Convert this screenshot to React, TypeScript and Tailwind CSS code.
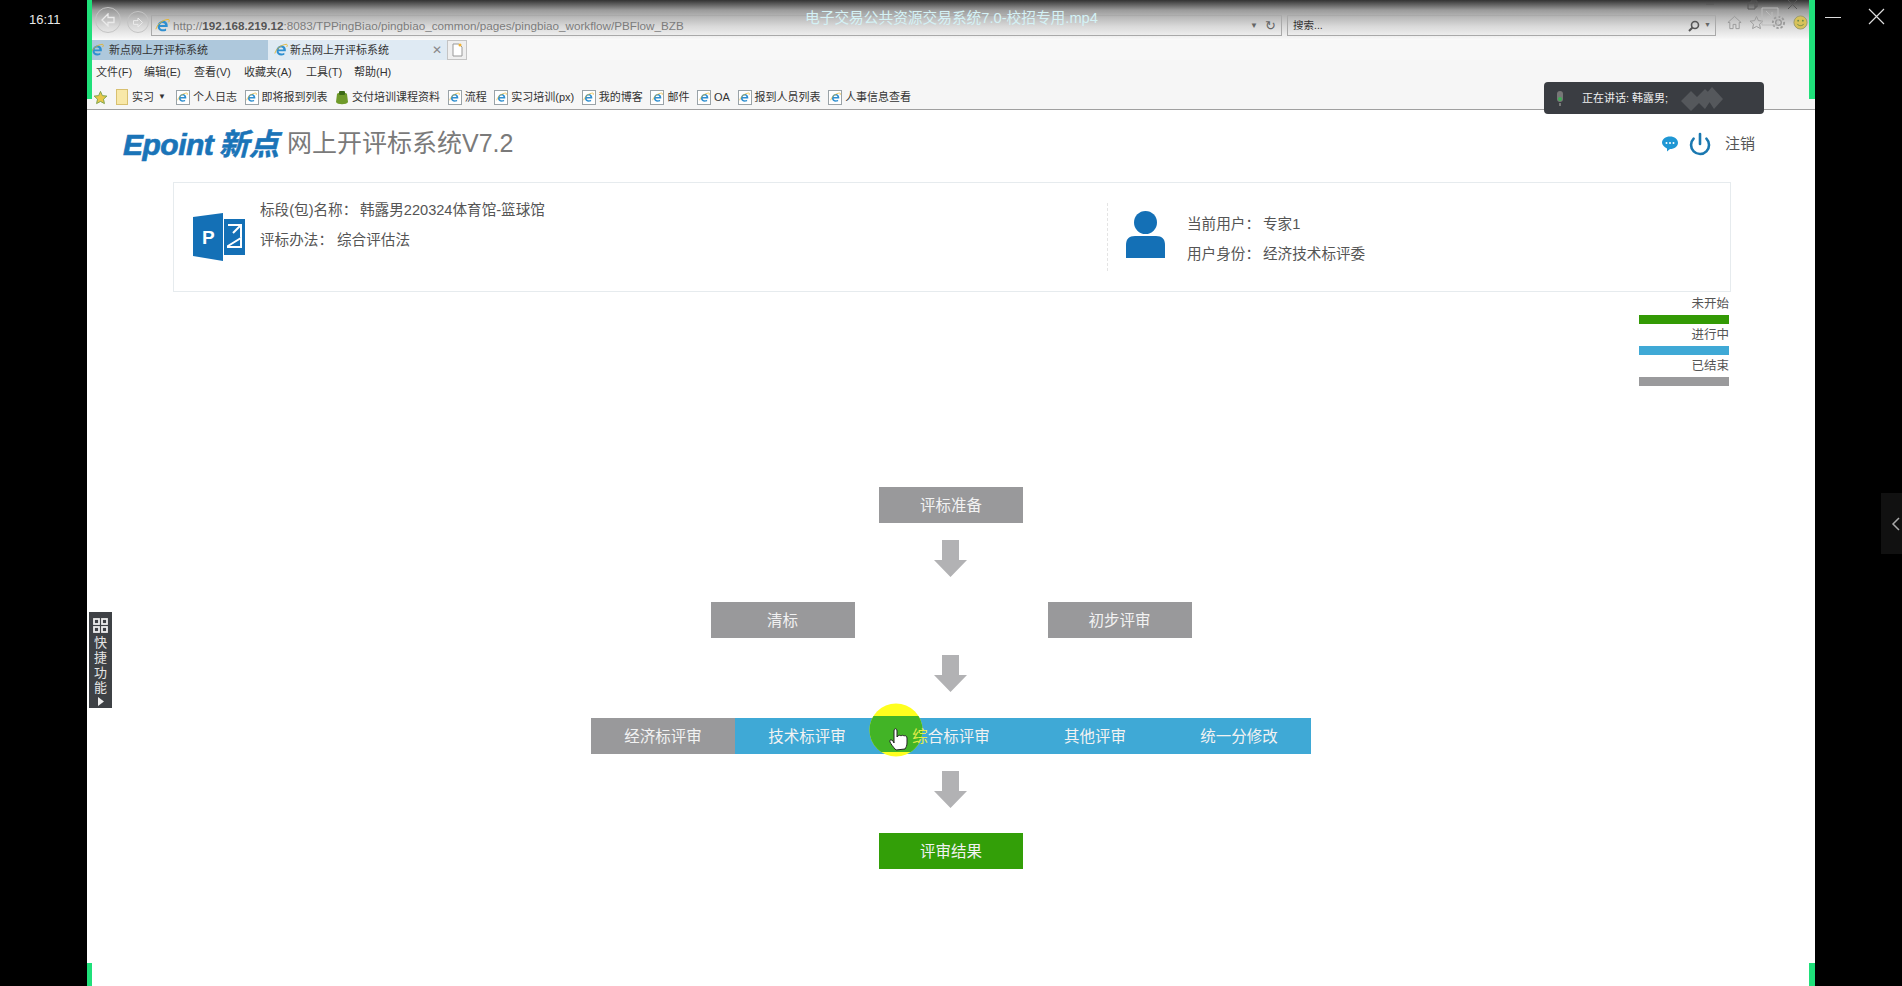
import { Power } from 'lucide-react'

const menus = [
  { label: '文件(F)', w: 'w-[48px]' },
  { label: '编辑(E)', w: 'w-[50px]' },
  { label: '查看(V)', w: 'w-[50px]' },
  { label: '收藏夹(A)', w: 'w-[62px]' },
  { label: '工具(T)', w: 'w-[48px]' },
  { label: '帮助(H)', w: 'w-[50px]' },
]

const bookmarks = ['个人日志', '即将报到列表', '交付培训课程资料', '流程', '实习培训(px)', '我的博客', '邮件', 'OA', '报到人员列表', '人事信息查看']

const legend = [
  { label: '未开始', color: 'bg-[#339a05]' },
  { label: '进行中', color: 'bg-[#3fa9d6]' },
  { label: '已结束', color: 'bg-[#9a9a9c]' },
]

const IeIcon = ({ size = 14 }: { size?: number }) => (
  <svg width={size} height={size} viewBox="0 0 16 16" className="shrink-0">
    <path d="M13.5 9.5H5.2c.2 2.6 3.8 3.4 6.6 1.6v2.4c-4.4 1.8-9 .2-9-4.700 0-4.300 4.700-7 8.200-5.300 2 1 2.800 3.400 2.500 6zM5.300 7.400h5.400c0-2.800-5-2.900-5.400 0z" fill="#2f8fd0" />
    <path d="M1 12C2 7 8 2 14 1.500c1.500 0 1.500 1.500.5 3" fill="none" stroke="#e5b52d" strokeWidth="1" />
  </svg>
)

const PageIcon = () => (
  <span className="relative flex h-[15px] w-[14px] shrink-0 items-center justify-center border border-[#9aa3a8] bg-white">
    <IeIcon size={11} />
  </span>
)

const GreenIcon = () => (
  <svg width="14" height="15" viewBox="0 0 14 15" className="shrink-0">
    <path d="M2 4c1-2 9-2 10 0l1 8c-1 3-11 3-12 0z" fill="#6f9a2a" />
    <rect x="4" y="1" width="6" height="4" rx="1" fill="#3c6a16" />
  </svg>
)

const FlowBox = ({ label, color = 'bg-[#99999b]' }: { label: string; color?: string }) => (
  <div className={`flex h-[36px] w-[144px] items-center justify-center pt-px text-[15.500px] text-[#f2f2f2] ${color}`}>{label}</div>
)

const Arrow = () => (
  <svg width="33" height="37" viewBox="0 0 33 37" className="mt-[17px] mb-[25px] ml-[-2px] block">
    <polygon points="8,0 25,0 25,20 33,20 16.500,37 0,20 8,20" fill="#b2b2b4" />
  </svg>
)

export default function App() {
  return (
    <div className="relative flex h-[986px] w-[1902px] overflow-hidden bg-black [font-family:'Liberation_Sans','Noto_Sans_CJK_SC',sans-serif]">
      {/* left rail */}
      <div className="w-[87px] shrink-0 pt-[10px] pl-[29px] text-[13px] text-[#e8e8e8]">16:11</div>

      {/* video frame */}
      <div className="relative flex w-[1728px] shrink-0 flex-col bg-white">
        <div className="h-[110px] shrink-0 border-b border-[#a0a0a0] bg-[#f6f6f6]">
          <div className="flex h-[40px] items-start bg-[linear-gradient(180deg,#333_0px,#666_5px,#9a9a9a_10px,#bcbcbc_18px,#d8d8d8_26px,#f2f2f2_37px,#fafafa_40px)] pt-[15px] pl-[8px]">
            <div className="mt-[-8px] flex h-[26px] w-[26px] items-center justify-center rounded-full border border-[#c4c4c4]">
              <svg width="16" height="14" viewBox="0 0 16 14"><path d="M8 1 2 7l6 6V9.500h6v-5H8z" fill="none" stroke="#eaeaea" strokeWidth="1.300" /></svg>
            </div>
            <div className="mt-[-4px] ml-[6px] flex h-[22px] w-[22px] items-center justify-center rounded-full border border-[#c4c4c4]">
              <svg width="12" height="11" viewBox="0 0 16 14"><path d="M8 1l6 6-6 6V9.500H2v-5h6z" fill="none" stroke="#eaeaea" strokeWidth="1.300" /></svg>
            </div>
            <div className="ml-[2px] flex h-[21px] w-[1131px] items-center border border-[#a9a9a9] pl-[3px] text-[11.700px] text-[#7c7c7c]">
              <IeIcon size={15} />
              <span className="ml-[3px] whitespace-nowrap">http://<span className="font-semibold text-[#555]">192.168.219.12</span>:8083/TPPingBiao/pingbiao_common/pages/pingbiao_workflow/PBFlow_BZB</span>
              <span className="ml-auto text-[8px] text-[#666]">▼</span>
              <span className="mr-[5px] ml-[7px] text-[13px] text-[#666]">↻</span>
            </div>
            <div className="ml-[5px] flex h-[21px] w-[429px] items-center border border-[#a9a9a9] pl-[5px] text-[10.500px] text-[#333]">
              搜索...
              <svg className="mr-[3px] ml-auto" width="14" height="14" viewBox="0 0 14 14"><circle cx="8" cy="6" r="3.500" fill="none" stroke="#555" strokeWidth="1.600" /><path d="M5.500 8.500 2 12" stroke="#555" strokeWidth="2" /></svg>
              <span className="mr-[4px] text-[7px] text-[#666]">▼</span>
            </div>
            <div className="ml-[11px] flex items-center gap-[7px]">
              <svg width="15" height="15" viewBox="0 0 16 16"><path d="M8 1.500 1 8h2v6.500h3.500V10h3v4.500H13V8h2z" fill="none" stroke="#999" /></svg>
              <svg width="15" height="15" viewBox="0 0 16 16"><path d="m8 1.500 2 4.500 4.800.5-3.600 3.300 1 4.700L8 12.200l-4.200 2.300 1-4.700L1.200 6.500 6 6z" fill="none" stroke="#999" /></svg>
              <svg width="15" height="15" viewBox="0 0 16 16"><circle cx="8" cy="8" r="3" fill="none" stroke="#999" strokeWidth="1.500" /><circle cx="8" cy="8" r="6" fill="none" stroke="#999" strokeWidth="2" strokeDasharray="2.500 2" /></svg>
              <svg width="15" height="15" viewBox="0 0 16 16"><circle cx="8" cy="8" r="7" fill="#d8c25a" stroke="#9a9a6a" /><path d="M4.500 9.500c1.500 2.500 5.500 2.500 7 0" fill="none" stroke="#6a8a4a" /><circle cx="5.500" cy="6" r="1" fill="#6a8a4a" /><circle cx="10.500" cy="6" r="1" fill="#6a8a4a" /></svg>
            </div>
          </div>
          <div className="flex h-[20px] items-stretch bg-[#f8f8f8] pl-[3px] text-[11px] text-[#333]">
            <div className="flex w-[178px] items-center gap-[5px] bg-[#aec8dc]"><IeIcon />新点网上开评标系统</div>
            <div className="flex w-[179px] items-center gap-[2px] bg-[#dfeaf3] pl-[6px]"><IeIcon />新点网上开评标系统<span className="mr-[5px] ml-auto text-[12px] text-[#888]">✕</span></div>
            <div className="flex w-[20px] items-center justify-center border border-[#c4c4c4] bg-[#efefef]">
              <svg width="11" height="14" viewBox="0 0 11 14"><path d="M1 1h6l3 3v9H1z" fill="#fff" stroke="#999" /><circle cx="8" cy="2" r="1.500" fill="#f0b030" /></svg>
            </div>
          </div>
          <div className="flex h-[25px] items-center pl-[9px] text-[11px] text-[#333]">
            {menus.map((m) => <span key={m.label} className={`${m.w} shrink-0 whitespace-nowrap`}>{m.label}</span>)}
          </div>
          <div className="flex h-[24px] items-center pl-[6px] text-[11px] text-[#333]">
            <svg width="15" height="15" viewBox="0 0 16 16"><path d="m8 1.500 2 4.500 4.800.5-3.600 3.300 1 4.700L8 12.200l-4.200 2.300 1-4.700L1.200 6.500 6 6z" fill="#e8c84a" stroke="#7aa04a" /></svg>
            <span className="ml-[8px] h-[16px] w-[12px] border border-[#d8c070] bg-[#f8e8a8]" />
            <span className="ml-[4px]">实习</span>
            <span className="ml-[4px] text-[8px]">▼</span>
            <div className="ml-[10px] flex items-center gap-[7.600px]">
              {bookmarks.map((b) => (
                <span key={b} className="flex items-center gap-[3px] whitespace-nowrap">
                  {b === '交付培训课程资料' ? <GreenIcon /> : <PageIcon />}
                  {b}
                </span>
              ))}
            </div>
          </div>
        </div>

        {/* page header */}
        <div className="flex h-[72px] shrink-0 items-center pr-[60px] pb-[4px] pl-[36px]">
          <span className="w-[96px] text-[30px] font-bold tracking-[-0.5px] text-[#1a74b8] italic [-webkit-text-stroke:0.7px_#1a74b8]">Epoint</span>
          <span className="w-[68px] text-[30px] font-bold text-[#1a74b8] italic [-webkit-text-stroke:0.5px_#1a74b8]">新点</span>
          <span className="text-[25px] text-[#7a7a7a]">网上开评标系统V7.2</span>
          <svg className="ml-auto" width="18" height="18" viewBox="0 0 18 18">
            <path d="M9 1.500c4.500 0 8 2.700 8 6.300s-3.500 6.300-8 6.300l-3 2.500v-3.200C3 12 1 10 1 7.800 1 4.200 4.500 1.500 9 1.500z" fill="#1f97d4" />
            <circle cx="5.500" cy="8" r="1" fill="#fff" /><circle cx="9" cy="8" r="1" fill="#fff" /><circle cx="12.500" cy="8" r="1" fill="#fff" />
          </svg>
          <Power className="ml-[9px] text-[#1a78b0]" size={24} strokeWidth={2.600} />
          <span className="ml-[13px] text-[15px] text-[#555]">注销</span>
        </div>

        {/* bid info card */}
        <div className="mr-[84px] ml-[86px] flex h-[110px] shrink-0 items-center border border-[#e6ebee] text-[14.600px] text-[#555]">
          <svg className="ml-[19px] shrink-0" width="52" height="48" viewBox="0 0 52 48">
            <polygon points="0,4 30,0 30,48 0,43" fill="#1470b6" />
            <rect x="31" y="6" width="21" height="36" fill="#1470b6" />
            <path d="M35 12h13v12M48 12l-8 8M35 34h13V25L35 33z" fill="none" stroke="#fff" strokeWidth="2" />
            <text x="9" y="31" fontSize="19" fontWeight="700" fill="#fff">P</text>
          </svg>
          <div className="ml-[15px] flex w-[847px] shrink-0 flex-col gap-[10px] pb-[22px]">
            <div className="flex h-[20px] items-center"><span className="w-[100px]">标段(包)名称：</span>韩露男220324体育馆-篮球馆</div>
            <div className="flex h-[20px] items-center"><span className="w-[77px]">评标办法：</span>综合评估法</div>
          </div>
          <div className="h-[68px] w-0 shrink-0 border-l border-dashed border-[#e4e4e4]" />
          <svg className="mb-[5px] ml-[18px] shrink-0" width="39" height="47" viewBox="0 0 39 47">
            <ellipse cx="19.500" cy="11.500" rx="11.500" ry="11.500" fill="#1470b6" />
            <path d="M0 47V34c0-6 3-9 9-9h21c6 0 9 3 9 9v13z" fill="#1470b6" />
          </svg>
          <div className="ml-[22px] flex flex-col gap-[10px] pt-[5px]">
            <div className="flex h-[20px] items-center"><span className="w-[76px]">当前用户：</span>专家1</div>
            <div className="flex h-[20px] items-center"><span className="w-[76px]">用户身份：</span>经济技术标评委</div>
          </div>
        </div>

        {/* legend */}
        <div className="mr-[86px] flex w-[90px] shrink-0 flex-col self-end pt-[3px] text-right text-[12.500px] text-[#555]">
          {legend.map((l) => (
            <div key={l.label} className="mb-[2px] flex h-[29px] flex-col justify-between">
              <span className="leading-[18px]">{l.label}</span>
              <span className={`h-[9px] w-full ${l.color}`} />
            </div>
          ))}
        </div>

        {/* workflow */}
        <div className="mt-[99px] flex flex-col items-center">
          <FlowBox label="评标准备" />
          <Arrow />
          <div className="flex gap-[193px]">
            <FlowBox label="清标" />
            <FlowBox label="初步评审" />
          </div>
          <Arrow />
          <div className="mt-px flex bg-[#3fa9d6]">
            <FlowBox label="经济标评审" />
            <FlowBox label="技术标评审" color="" />
            <div className="relative z-20 flex h-[36px] w-[144px] items-center justify-center pt-px text-[15.500px] text-[#f2f2f2]">
              <span className="text-[#e6ee4a]">综</span>合标评审
            </div>
            <FlowBox label="其他评审" color="" />
            <FlowBox label="统一分修改" color="" />
          </div>
          <Arrow />
          <FlowBox label="评审结果" color="bg-[#339f08]" />
        </div>

        {/* recording overlays */}
        <div className="absolute top-0 left-0 h-[99px] w-[5px] bg-[#1fe07a]" />
        <div className="absolute top-0 right-0 h-[99px] w-[6px] bg-[#1fe07a]" />
        <div className="absolute bottom-0 left-0 h-[23px] w-[5px] bg-[#1fe07a]" />
        <div className="absolute right-0 bottom-0 h-[23px] w-[6px] bg-[#1fe07a]" />
        <div className="absolute top-[8px] left-[718px] text-[14.700px] leading-[20px] whitespace-nowrap text-[#d4f2f6]">电子交易公共资源交易系统7.0-校招专用.mp4</div>
        <div className="absolute top-[82px] left-[1457px] flex h-[32px] w-[220px] items-center rounded-[4px] bg-[#3a3d42] pt-px pl-[11px] text-[11px] text-[#eee]">
          <svg width="10" height="16" viewBox="0 0 10 16"><rect x="2" y="0" width="6" height="11" rx="3" fill="#777" /><circle cx="5" cy="8" r="2" fill="#3fae55" /><path d="M5 12v3" stroke="#777" strokeWidth="2" /></svg>
          <span className="ml-[17px]">正在讲话: 韩露男;</span>
          <svg className="ml-[13px]" width="42" height="24" viewBox="0 0 42 24"><path d="M0 14 10 4l10 10-10 10zM14 12 24 2l8 8-8 12zM24 8l7-8 11 12-9 10z" fill="#55585c" /></svg>
        </div>
        <div className="absolute top-[612px] left-[2px] flex h-[96px] w-[23px] flex-col items-center bg-[#3e4145] pt-[6px] text-[13px] leading-[15px] text-[#e4e4e4]">
          <svg className="mb-[2px]" width="15" height="15" viewBox="0 0 15 15" fill="none" stroke="#eee" strokeWidth="1.800"><rect x="1" y="1" width="5" height="5" /><rect x="9" y="1" width="5" height="5" /><rect x="1" y="9" width="5" height="5" /><rect x="9" y="9" width="5" height="5" /></svg>
          <span>快</span><span>捷</span><span>功</span><span>能</span>
          <svg className="mt-[2px]" width="6" height="9" viewBox="0 0 6 9"><path d="M0 0l6 4.500L0 9z" fill="#eee" /></svg>
        </div>
        {/* window buttons of the recorded browser */}
        <div className="absolute top-0 right-[5px] flex items-start">
          <svg width="110" height="26" viewBox="0 0 110 26" fill="none" stroke="#555">
            <path d="M6 4h8M48 3h7v6h-7zM51 3V1h6v6h-2" />
            <path d="M62 8h16v17H62zM66 11l6 6M72 12v5h-5" stroke="#bbb" />
            <path d="M88 0l9 9M97 0l-9 9" />
          </svg>
        </div>
        {/* pointer highlight */}
        <svg className="absolute top-[703px] left-[782px] z-10" width="54" height="54" viewBox="0 0 54 54">
          <defs><clipPath id="bar"><rect x="0" y="13" width="54" height="36" /></clipPath></defs>
          <circle cx="27" cy="27" r="26.500" fill="#ffff1e" />
          <circle cx="27" cy="27" r="26.500" fill="#42b426" clipPath="url(#bar)" />
          <path d="M27 47c-3-3-5-6-6-8-1-2 1-3 3-1l1 2V28c0-3 3-3 3 0v6l1-1c1-1 2-1 3 0 1-1 2-1 3 0 1-1 3 0 3 2v5c0 3-1 4-2 6z" fill="#fff" stroke="#222" strokeWidth="1" />
        </svg>
      </div>

      {/* right rail */}
      <div className="relative flex-1">
        <div className="absolute top-[17px] left-[10px] h-[1px] w-[16px] bg-[#ddd]" />
        <svg className="absolute top-[8px] left-[53px]" width="17" height="17" viewBox="0 0 17 17"><path d="M1 1l15 15M16 1 1 16" stroke="#ddd" strokeWidth="1.200" /></svg>
        <div className="absolute top-[493px] right-0 flex h-[61px] w-[21px] items-center justify-end bg-[#111] pr-[2px]">
          <svg width="9" height="14" viewBox="0 0 9 14"><path d="M8 1 2 7l6 6" fill="none" stroke="#aaa" strokeWidth="1.500" /></svg>
        </div>
      </div>
    </div>
  )
}
